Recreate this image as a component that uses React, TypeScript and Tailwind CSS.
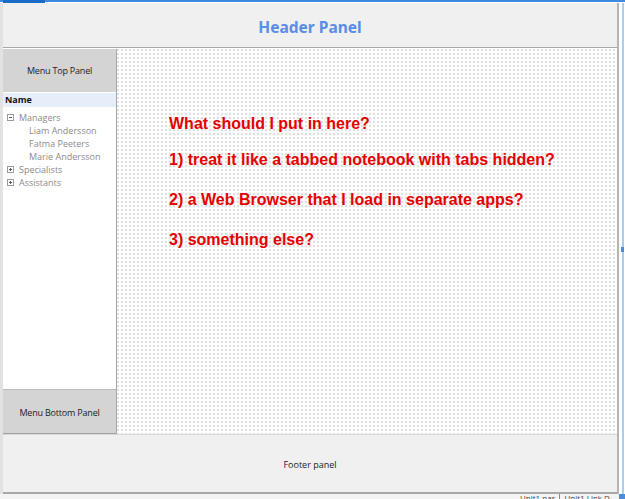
import React from "react";

const Box = ({ minus }: { minus?: boolean }) => (
  <span className="relative inline-block w-[7px] h-[7px] border border-[#9a9a9a] bg-white mr-[5px] shrink-0">
    <span className="absolute left-[1px] top-[2px] w-[3px] h-[1px] bg-[#555]" />
    {!minus && <span className="absolute left-[2px] top-[1px] w-[1px] h-[3px] bg-[#555]" />}
  </span>
);

export default function App() {
  const uiFont = { fontFamily: '"Open Sans", "Noto Sans", sans-serif' };
  return (
    <div className="w-[625px] h-[499px] overflow-hidden bg-white flex flex-col" style={uiFont}>
      {/* top blue line */}
      <div className="h-[3px] flex shrink-0">
        <div className="w-[3px] h-[2px] bg-[#3d8be0]" />
        <div className="w-[42px] h-[3px] bg-[#1b6cc9]" />
        <div className="flex-1 h-[2px] bg-[#3d8be0]" />
      </div>
      <div className="flex h-[491px] shrink-0">
        <div className="w-[3px] bg-[#e2e2e2]" />
        {/* form */}
        <div className="w-[616px] flex flex-col border-r-2 border-[#b4b4b4]">
          {/* header */}
          <div className="h-[45px] bg-[#f0f0f0] border-b border-[#a8a8a8] flex items-center justify-center">
            <span className="text-[15.5px] font-bold text-[#5a8de6] mt-[5px]" style={{ fontFamily: '"Noto Sans", sans-serif' }}>
              Header Panel
            </span>
          </div>
          <div className="h-[1px] bg-white" />
          {/* middle */}
          <div className="h-[385px] flex">
            <div className="w-[114px] flex flex-col border-r border-[#a8a8a8]">
              <div className="h-[43px] bg-[#d4d4d4] flex items-center justify-center text-[9px] text-[#222] tracking-[-0.2px]">
                Menu Top Panel
              </div>
              <div className="flex-1 bg-white flex flex-col text-[9px] text-[#8c8c8c]">
                <div className="h-[14px] mt-[1px] bg-[#e6eef9] flex items-center pl-[2px] font-bold text-[#111]">Name</div>
                <div className="flex flex-col pt-[4px]">
                  <div className="h-[13px] flex items-center pl-[4px]"><Box minus />Managers</div>
                  <div className="h-[13px] flex items-center pl-[26px]">Liam Andersson</div>
                  <div className="h-[13px] flex items-center pl-[26px]">Fatma Peeters</div>
                  <div className="h-[13px] flex items-center pl-[26px]">Marie Andersson</div>
                  <div className="h-[13px] flex items-center pl-[4px]"><Box />Specialists</div>
                  <div className="h-[13px] flex items-center pl-[4px]"><Box />Assistants</div>
                </div>
              </div>
              <div className="h-[45px] bg-[#d4d4d4] border-t border-[#bcbcbc] border-b border-b-[#a0a0a0] flex items-center justify-center text-[9px] text-[#222] tracking-[-0.2px]">
                <span className="mt-[3px]">Menu Bottom Panel</span>
              </div>
            </div>
            <div
              className="flex-1 bg-[#fdfdfd] bg-[radial-gradient(circle_at_1px_1px,#bcbcbc_0.6px,transparent_0.8px)] bg-[size:4px_4px] pl-[52px] pt-[66px] flex flex-col"
              style={{ fontFamily: '"Liberation Sans", Arial, sans-serif' }}
            >
              <div className="text-[16px] leading-[18px] font-bold text-[#e60000]">What should I put in here?</div>
              <div className="text-[16px] leading-[18px] font-bold text-[#e60000] mt-[18px]">1) treat it like a tabbed notebook with tabs hidden?</div>
              <div className="text-[16px] leading-[18px] font-bold text-[#e60000] mt-[22px]">2) a Web Browser that I load in separate apps?</div>
              <div className="text-[16px] leading-[18px] font-bold text-[#e60000] mt-[22px]">3) something else?</div>
            </div>
          </div>
          {/* footer */}
          <div className="flex-1 bg-[#f0f0f0] border-t border-[#d8d8d8] border-b-2 border-b-[#a8a8a8] flex items-center justify-center text-[9px] text-[#222]">
            <span className="mt-[3px]">Footer panel</span>
          </div>
        </div>
        <div className="w-[3px] bg-white" />
        <div className="relative w-[2px] bg-[#a8cef3]">
          <div className="absolute left-[-1px] top-[244px] w-[3px] h-[5px] bg-[#4a8fdc]" />
        </div>
        <div className="flex-1 bg-white" />
      </div>
      {/* status strip */}
      <div className="flex-1 bg-[#f4f4f4] relative overflow-hidden">
        <div className="absolute left-[520px] top-[-1px] text-[8px] leading-[10px] text-[#444] flex items-start">
          <span className="pr-[4px] border-r border-[#888]">Unit1.pas</span>
          <span className="pl-[4px]">Unit1.Link  D</span>
        </div>
        <div className="absolute left-[619px] top-0 w-[6px] h-[5px] bg-[#4a8fdc]" />
      </div>
    </div>
  );
}
